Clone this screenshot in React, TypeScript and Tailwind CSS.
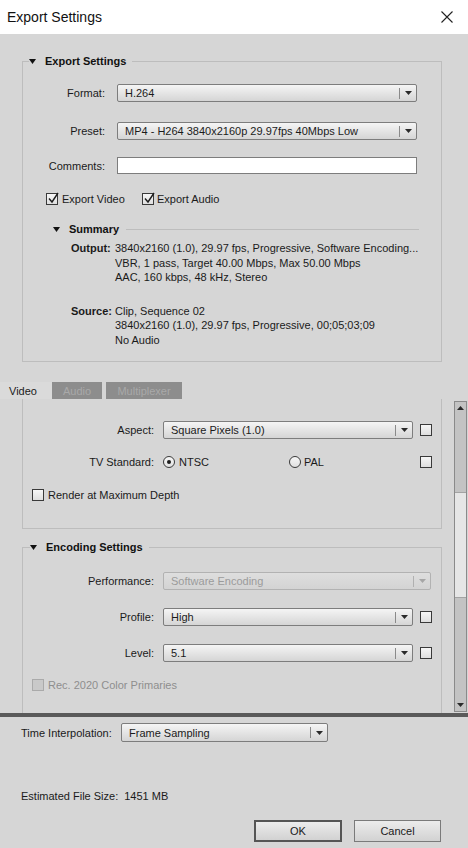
import React from "react";

const Arrow = ({ disabled = false }: { disabled?: boolean }) => (
  <svg width="7" height="4" viewBox="0 0 7 4">
    <polygon points="0,0 7,0 3.5,4" fill={disabled ? "#a6a6a6" : "#2a2a2a"} />
  </svg>
);

const Tri = () => (
  <svg width="7" height="5" viewBox="0 0 7 5" className="shrink-0">
    <polygon points="0,0 7,0 3.5,5" fill="#111" />
  </svg>
);

const Dropdown = ({
  value,
  className,
  disabled = false,
}: {
  value: string;
  className: string;
  disabled?: boolean;
}) => (
  <div
    className={
      "flex items-center shrink-0 border rounded-[2px] bg-linear-to-b " +
      (disabled
        ? "border-[#b2b2b2] from-[#dedede] to-[#d3d3d3] text-[#9b9b9b] "
        : "border-[#7d7d7d] from-[#f5f5f5] to-[#d5d5d5] text-[#1b1b1b] ") +
      className
    }
  >
    <span className="flex-1 pl-[7px] whitespace-nowrap overflow-hidden">{value}</span>
    <span className={"w-px h-[11px] " + (disabled ? "bg-[#b0b0b0]" : "bg-[#8a8a8a]")} />
    <span className="w-[16px] flex justify-center">
      <Arrow disabled={disabled} />
    </span>
  </div>
);

const Check = ({ checked = false, disabled = false }: { checked?: boolean; disabled?: boolean }) => (
  <span
    className={
      "relative block w-[12px] h-[12px] shrink-0 border " +
      (disabled
        ? "border-[#aaaaaa] bg-[#c9c9c9]"
        : "border-[#3a3a3a] bg-linear-to-b from-[#f7f7f7] to-[#dfdfdf]")
    }
  >
    {checked && (
      <svg
        width="13"
        height="13"
        viewBox="0 0 13 13"
        className="absolute left-[0px] top-[-2px] overflow-visible"
      >
        <path d="M2 6.5 L5 10 L11 1" stroke="#1d1d1d" strokeWidth="1.4" fill="none" />
      </svg>
    )}
  </span>
);

const Radio = ({ checked = false }: { checked?: boolean }) => (
  <span className="w-[12px] h-[12px] shrink-0 rounded-full border border-[#3a3a3a] bg-linear-to-b from-[#f7f7f7] to-[#e0e0e0] flex items-center justify-center">
    {checked && <span className="w-[4px] h-[4px] rounded-full bg-[#1d1d1d]" />}
  </span>
);

const GroupHeader = ({ title, lead }: { title: string; lead: string }) => (
  <div className="-mt-[7px] h-[14px] flex items-center">
    <span className={"h-px bg-[#bdbdbd] " + lead} />
    <Tri />
    <span className="ml-[9px] font-bold text-[#111] whitespace-nowrap">{title}</span>
    <span className="ml-[6px] flex-1 h-px bg-[#bdbdbd]" />
  </div>
);

export default function App() {
  return (
    <div className="w-[468px] h-[848px] overflow-hidden flex flex-col bg-[#d6d6d6] text-[11px] leading-[14px] text-[#1a1a1a] font-['Liberation_Sans',Arial,sans-serif]">
      {/* Title bar */}
      <div className="h-[34px] shrink-0 bg-white flex items-center justify-between pl-[7px] pr-[15px]">
        <span className="text-[14px] text-[#111] leading-[18px]">Export Settings</span>
        <svg width="12" height="12" viewBox="0 0 12 12">
          <path d="M0.5 0.5 L11.5 11.5 M11.5 0.5 L0.5 11.5" stroke="#222" strokeWidth="1.1" />
        </svg>
      </div>

      {/* Upper export settings */}
      <div className="pt-[27px] shrink-0">
        <div className="ml-[22px] w-[420px] h-[301px] border-x border-b border-[#bdbdbd] flex flex-col">
          <GroupHeader title="Export Settings" lead="w-[6px]" />

          <div className="mt-[16px] h-[18px] flex items-center">
            <span className="w-[82px] text-right">Format:</span>
            <Dropdown value="H.264" className="ml-[12px] w-[300px] h-[18px]" />
          </div>
          <div className="mt-[20px] h-[18px] flex items-center">
            <span className="w-[82px] text-right">Preset:</span>
            <Dropdown
              value="MP4 - H264 3840x2160p 29.97fps 40Mbps Low"
              className="ml-[12px] w-[300px] h-[18px]"
            />
          </div>
          <div className="mt-[17px] h-[17px] flex items-center">
            <span className="w-[82px] text-right">Comments:</span>
            <span className="ml-[12px] w-[300px] h-[17px] bg-white border border-[#7d7d7d]" />
          </div>

          <div className="mt-[19px] h-[12px] flex items-center pl-[23px]">
            <span className="w-[96px] flex items-center">
              <Check checked />
              <span className="ml-[4px]">Export Video</span>
            </span>
            <span className="flex items-center">
              <Check checked />
              <span className="ml-[3px]">Export Audio</span>
            </span>
          </div>

          <div className="mt-[17px] h-[14px] flex items-center pl-[30px] pr-[22px]">
            <Tri />
            <span className="ml-[9px] font-bold text-[#111]">Summary</span>
            <span className="ml-[7px] flex-1 h-px bg-[#bdbdbd]" />
          </div>

          <div className="mt-[5px] ml-[48px] grid grid-cols-[44px_1fr] leading-[14.5px] whitespace-nowrap">
            <span className="font-bold">Output:</span>
            <div className="flex flex-col">
              <span>3840x2160 (1.0), 29.97 fps, Progressive, Software Encoding...</span>
              <span>VBR, 1 pass, Target 40.00 Mbps, Max 50.00 Mbps</span>
              <span>AAC, 160 kbps, 48 kHz, Stereo</span>
            </div>
          </div>
          <div className="mt-[19px] ml-[48px] grid grid-cols-[44px_1fr] leading-[14.5px] whitespace-nowrap">
            <span className="font-bold">Source:</span>
            <div className="flex flex-col">
              <span>Clip, Sequence 02</span>
              <span>3840x2160 (1.0), 29.97 fps, Progressive, 00;05;03;09</span>
              <span>No Audio</span>
            </div>
          </div>
        </div>
      </div>

      {/* Tabs */}
      <div className="mt-[20px] h-[17px] shrink-0 flex">
        <span className="w-[52px] pl-[9px] flex items-center bg-[#dadada]">Video</span>
        <span className="w-[50px] flex items-center justify-center bg-[#8d8d8d] text-[#a9a9a9]">Audio</span>
        <span className="ml-[4px] w-[76px] flex items-center justify-center bg-[#8d8d8d] text-[#a9a9a9]">
          Multiplexer
        </span>
      </div>

      {/* Scroll area */}
      <div className="h-[314px] shrink-0 flex">
        <div className="flex-1 overflow-hidden flex flex-col">
          {/* Video group (scrolled) */}
          <div className="ml-[22px] w-[420px] h-[130px] shrink-0 border-x border-b border-[#bdbdbd] flex flex-col">
            <div className="mt-[22px] h-[18px] flex items-center">
              <span className="w-[131px] text-right">Aspect:</span>
              <Dropdown value="Square Pixels (1.0)" className="ml-[9px] w-[250px] h-[18px]" />
              <span className="ml-[7px]">
                <Check />
              </span>
            </div>
            <div className="mt-[17px] h-[12px] flex items-center">
              <span className="w-[131px] text-right">TV Standard:</span>
              <span className="ml-[9px] w-[250px] flex items-center">
                <span className="w-[126px] flex items-center">
                  <Radio checked />
                  <span className="ml-[4px]">NTSC</span>
                </span>
                <Radio />
                <span className="ml-[3px]">PAL</span>
              </span>
              <span className="ml-[7px]">
                <Check />
              </span>
            </div>
            <div className="mt-[21px] h-[12px] flex items-center pl-[9px]">
              <Check />
              <span className="ml-[4px]">Render at Maximum Depth</span>
            </div>
          </div>

          {/* Encoding group */}
          <div className="mt-[18px] ml-[22px] w-[420px] h-[220px] shrink-0 border-x border-[#bdbdbd] flex flex-col">
            <GroupHeader title="Encoding Settings" lead="w-[7px]" />
            <div className="mt-[18px] h-[18px] flex items-center">
              <span className="w-[131px] text-right">Performance:</span>
              <Dropdown value="Software Encoding" disabled className="ml-[9px] w-[268px] h-[18px]" />
            </div>
            <div className="mt-[18px] h-[18px] flex items-center">
              <span className="w-[131px] text-right">Profile:</span>
              <Dropdown value="High" className="ml-[9px] w-[250px] h-[18px]" />
              <span className="ml-[7px]">
                <Check />
              </span>
            </div>
            <div className="mt-[18px] h-[18px] flex items-center">
              <span className="w-[131px] text-right">Level:</span>
              <Dropdown value="5.1" className="ml-[9px] w-[250px] h-[18px]" />
              <span className="ml-[7px]">
                <Check />
              </span>
            </div>
            <div className="mt-[17px] h-[12px] flex items-center pl-[9px]">
              <Check disabled />
              <span className="ml-[4px] text-[#8e8e8e]">Rec. 2020 Color Primaries</span>
            </div>
          </div>
        </div>

        {/* Scrollbar */}
        <div className="mt-[2px] mr-[1px] w-[13px] h-[311px] shrink-0 border border-[#8a8a8a] bg-[#c3c3c3] flex flex-col">
          <div className="h-[12px] flex items-center justify-center">
            <svg width="7" height="4" viewBox="0 0 7 4">
              <polygon points="0,4 7,4 3.5,0" fill="#2a2a2a" />
            </svg>
          </div>
          <div className="h-[78px]" />
          <div className="h-[106px] bg-[#e6e6e6] border-y border-[#a3a3a3]" />
          <div className="flex-1" />
          <div className="h-[12px] flex items-center justify-center">
            <Arrow />
          </div>
        </div>
      </div>

      {/* Dark divider */}
      <div className="h-[4px] shrink-0 bg-[#5a5a5a]" />

      {/* Footer */}
      <div className="flex-1 flex flex-col">
        <div className="mt-[6px] h-[19px] flex items-center pl-[21px]">
          <span className="w-[100px]">Time Interpolation:</span>
          <Dropdown value="Frame Sampling" className="w-[207px] h-[19px]" />
        </div>
        <div className="mt-[47px] pl-[21px] h-[14px] flex items-center">
          <span>Estimated File Size:</span>
          <span className="ml-[6px]">1451 MB</span>
        </div>
        <div className="mt-[17px] flex justify-end pr-[27px]">
          <button className="w-[88px] h-[22px] border-2 border-[#555555] bg-linear-to-b from-[#ececec] to-[#d2d2d2] text-[11px] text-[#1a1a1a]">
            OK
          </button>
          <button className="ml-[12px] w-[87px] h-[22px] border border-[#7a7a7a] bg-linear-to-b from-[#ececec] to-[#d2d2d2] text-[11px] text-[#1a1a1a]">
            Cancel
          </button>
        </div>
      </div>
    </div>
  );
}
